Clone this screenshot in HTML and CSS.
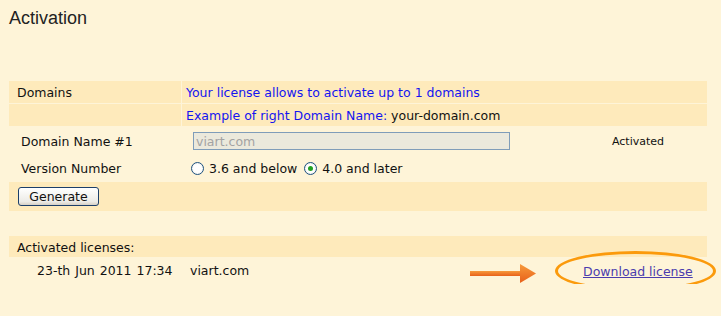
FILE: index.html
```html
<!DOCTYPE html>
<html lang="en">
<head>
  <meta charset="UTF-8">
  <title>Activation</title>
  <link rel="stylesheet" href="styles.css">
</head>
<body>

<h1 class="title">Activation</h1>

<table class="form-table">
  <colgroup>
    <col class="col-label">
    <col class="col-value">
    <col class="col-status">
  </colgroup>
  <tr class="band">
    <td class="label-cell">Domains</td>
    <td class="note" colspan="2">Your license allows to activate up to 1 domains</td>
  </tr>
  <tr class="band">
    <td class="label-cell"></td>
    <td class="note" colspan="2">Example of right Domain Name: <span class="plain">your-domain.com</span></td>
  </tr>
  <tr class="plain-row">
    <td class="label-cell indent">Domain Name #1</td>
    <td><input type="text" class="domain-input" value="viart.com" disabled></td>
    <td class="status">Activated</td>
  </tr>
  <tr class="plain-row">
    <td class="label-cell indent">Version Number</td>
    <td colspan="2">
      <label class="radio"><input type="radio" name="ver"> 3.6 and below</label>
      <label class="radio"><input type="radio" name="ver" checked> 4.0 and later</label>
    </td>
  </tr>
  <tr class="band button-row">
    <td colspan="3"><button class="btn">Generate</button></td>
  </tr>
</table>

<div class="licenses">
  <div class="licenses-head">Activated licenses:</div>
  <div class="license-row">
    <span class="lic-date">23-th Jun 2011 17:34</span>
    <span class="lic-domain">viart.com</span>
    <svg class="arrow" width="68" height="24" viewBox="0 0 68 24">
      <defs>
        <linearGradient id="ag" x1="0" y1="0" x2="0" y2="1">
          <stop offset="0" stop-color="#f79a3a"/>
          <stop offset="1" stop-color="#e8601a"/>
        </linearGradient>
      </defs>
      <rect x="0" y="10" width="52" height="5" fill="url(#ag)"/>
      <polygon points="50,3 66,12.5 50,22" fill="url(#ag)"/>
    </svg>
    <span class="download">
      <a href="#">Download license</a>
    </span>
  </div>
</div>

</body>
</html>
```

FILE: styles.css
```css
body {
  margin: 0;
  padding: 0 14px 0 9px;
  background-color: #fef4d8;
  font-family: 'DejaVu Sans', Verdana, sans-serif;
  font-size: 12.5px;
  color: #111;
}

.title {
  font-family: 'Liberation Sans', Arial, sans-serif;
  font-size: 18px;
  font-weight: normal;
  color: #222;
  margin: 0;
  padding-top: 8px;
  height: 73px;
}

.form-table {
  width: 698px;
  table-layout: fixed;
  border-collapse: separate;
  border-spacing: 0;
}

.col-label {
  width: 173px;
}

.col-status {
  width: 95px;
}

.form-table td {
  padding: 0;
}

.band td {
  background-color: #feeabb;
}

.band:first-child td {
  border-bottom: 1px solid #fef4d8;
  height: 22px;
}

.band:nth-child(2) td {
  height: 22px;
}

.label-cell {
  padding-left: 8px !important;
  border-right: 1px solid #fef4d8;
}

.label-cell.indent {
  padding-left: 12px !important;
  border-right: none;
}

.note {
  color: #1414f0;
  padding-left: 4px !important;
}

.plain {
  color: #111;
}

.plain-row td {
  height: 27px;
}

.plain-row:nth-child(3) td {
  height: 28px;
  padding-top: 1px;
}

.domain-input {
  margin-left: 11px;
  width: 317px;
  height: 18px;
  box-sizing: border-box;
  border: 1px solid #7f9db9;
  background-color: #ebe9dc;
  color: #a3a3a3;
  font-family: 'DejaVu Sans', Verdana, sans-serif;
  font-size: 12.5px;
  padding: 0 2px;
}

.status {
  font-size: 11px;
}

.radio {
  margin-left: 9px;
}

.radio + .radio {
  margin-left: 3px;
}

.radio input {
  appearance: none;
  width: 13px;
  height: 13px;
  margin: 0 1px 0 0;
  border: 1px solid #1c5180;
  border-radius: 50%;
  background: radial-gradient(circle, #fff 50%, #dcdcd6 100%);
  vertical-align: -2px;
  position: relative;
}

.radio input:checked::after {
  content: '';
  position: absolute;
  left: 3px;
  top: 3px;
  width: 5px;
  height: 5px;
  border-radius: 50%;
  background-color: #21a121;
}

.button-row td {
  height: 29px;
  padding-left: 9px;
}

.btn {
  font-family: 'DejaVu Sans', Verdana, sans-serif;
  font-size: 12.5px;
  color: #111;
  width: 81px;
  height: 19px;
  padding: 0;
  border: 1px solid #1c3f6a;
  border-radius: 3px;
  background: linear-gradient(#ffffff, #ecebe6 80%, #d6d0c5);
}

.licenses {
  width: 698px;
  margin-top: 25px;
}

.licenses-head {
  background-color: #feeabb;
  height: 21px;
  line-height: 23px;
  padding-left: 8px;
}

.license-row {
  display: flex;
  align-items: center;
  height: 27px;
}

.lic-date {
  margin-left: 28px;
  width: 153px;
  word-spacing: 1px;
}

.lic-domain {
  width: 280px;
}

.arrow {
  margin-top: 4px;
}

.download {
  position: relative;
  margin-left: 45px;
  margin-top: 1px;
}

.download a {
  color: #4a3cae;
}

.download::after {
  content: '';
  position: absolute;
  left: -28px;
  top: -13px;
  width: 155px;
  height: 34px;
  border: 3px solid #fb9a0c;
  border-radius: 50%;
}
```
